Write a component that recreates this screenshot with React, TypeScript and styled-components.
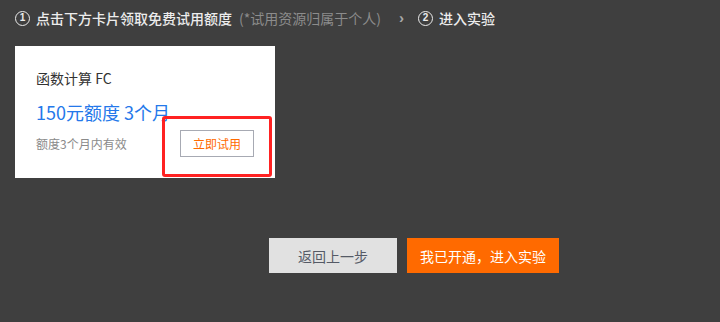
import React from "react";
import styled, { createGlobalStyle } from "styled-components";

const Global = createGlobalStyle`
  html, body { margin: 0; padding: 0; background: #3f3f3f; }
  body { font-family: "Noto Sans CJK SC", "Microsoft YaHei", sans-serif; }
  * { box-sizing: border-box; }
`;

const Page = styled.div`
  width: 720px;
  height: 322px;
  background: #3f3f3f;
  display: flex;
  flex-direction: column;
`;

const Steps = styled.div`
  height: 36px;
  padding: 0 0 0 15px;
  display: flex;
  align-items: center;
  font-size: 14px;
  line-height: 20px;
  color: #ececec;
  white-space: nowrap;
`;

const StepLabel = styled.span`
  display: flex;
  align-items: center;
  gap: 6px;
  font-weight: 500;
`;

const StepNum = styled.span`
  width: 15px;
  height: 15px;
  border: 1.5px solid #ececec;
  border-radius: 50%;
  display: inline-flex;
  align-items: center;
  justify-content: center;
  font-family: "Liberation Sans", Arial, sans-serif;
  font-size: 10px;
  font-weight: 700;
  line-height: 1;
`;

const Note = styled.span`
  color: #8c8c8c;
  margin-left: 7px;
`;

const Chevron = styled.span`
  color: #a8a8a8;
  margin: 0 14px 0 18px;
  font-family: "Liberation Sans", Arial, sans-serif;
  font-size: 15px;
  font-weight: 700;
`;

const Card = styled.div`
  position: relative;
  margin: 10px 0 0 15px;
  width: 260px;
  height: 132px;
  background: #ffffff;
  padding: 22px 21px 21px 21px;
  display: flex;
  flex-direction: column;
`;

const CardTitle = styled.div`
  font-size: 14px;
  line-height: 20px;
  color: #333333;
`;

const Amount = styled.div`
  margin-top: 11px;
  font-size: 18px;
  line-height: 26px;
  color: #2478ea;
`;

const CardFoot = styled.div`
  margin-top: 5px;
  display: flex;
  justify-content: space-between;
  align-items: center;
`;

const Hint = styled.span`
  font-size: 12px;
  color: #8a8a8a;
`;

const TryButton = styled.button`
  width: 74px;
  height: 27px;
  border: 1px solid #a7aab3;
  background: #fff;
  color: #ff6a00;
  font-family: inherit;
  font-size: 12px;
  padding: 0;
  cursor: pointer;
`;

const Highlight = styled.div`
  position: absolute;
  left: 147px;
  top: 70px;
  width: 110px;
  height: 61px;
  border: 3px solid #ff2222;
  border-radius: 3px;
  pointer-events: none;
`;

const Actions = styled.div`
  margin: 60px 0 0 269px;
  display: flex;
  gap: 10px;
`;

const ActionButton = styled.button<{ $primary?: boolean }>`
  height: 35px;
  padding: 0 ${(p) => (p.$primary ? 13 : 29)}px;
  border: none;
  font-family: inherit;
  font-size: 14px;
  background: ${(p) => (p.$primary ? "#ff6a00" : "#e1e1e1")};
  color: ${(p) => (p.$primary ? "#ffffff" : "#555a66")};
  cursor: pointer;
`;

export default function App() {
  return (
    <>
      <Global />
      <Page>
        <Steps>
          <StepLabel>
            <StepNum>1</StepNum>点击下方卡片领取免费试用额度
          </StepLabel>
          <Note>(*试用资源归属于个人)</Note>
          <Chevron>›</Chevron>
          <StepLabel>
            <StepNum>2</StepNum>进入实验
          </StepLabel>
        </Steps>
        <Card>
          <CardTitle>函数计算 FC</CardTitle>
          <Amount>150元额度 3个月</Amount>
          <CardFoot>
            <Hint>额度3个月内有效</Hint>
            <TryButton>立即试用</TryButton>
          </CardFoot>
          <Highlight />
        </Card>
        <Actions>
          <ActionButton>返回上一步</ActionButton>
          <ActionButton $primary>我已开通，进入实验</ActionButton>
        </Actions>
      </Page>
    </>
  );
}
